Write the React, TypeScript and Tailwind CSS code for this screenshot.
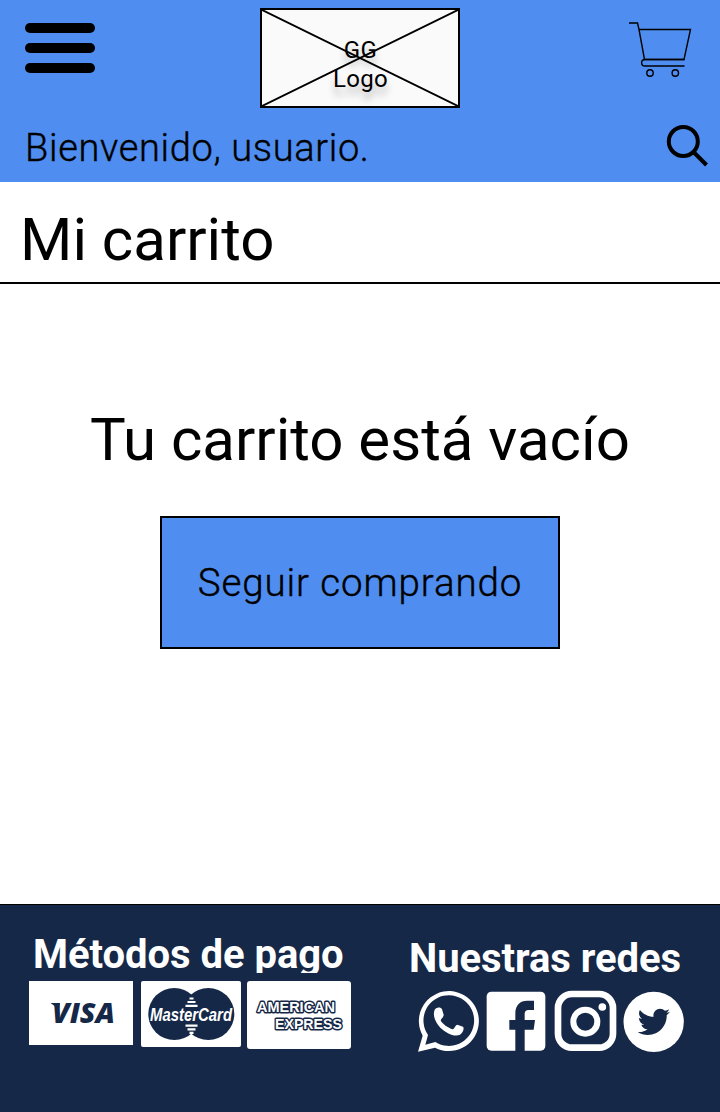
import { FaTwitter } from "react-icons/fa";

function CartIcon() {
  return (
    <svg className="h-[62px] w-[66px]" viewBox="0 0 66 62" fill="none" stroke="#000" strokeWidth="1.4">
      <path d="M2 6H10.5L12 12.5H63.5L57 42.5H17.5L12 12.5" />
      <path d="M57.5 42.5H18C13.5 42.5 13.5 49 18 49H57.5" />
      <circle cx="23" cy="56" r="3.2" />
      <circle cx="48.3" cy="56" r="3.2" />
    </svg>
  );
}

function Header() {
  return (
    <header className="h-[182px] bg-[#4f8ef0]">
      <div className="flex h-[115px] items-start pt-2 pr-[27px] pl-[25px]">
        <button aria-label="Menú" className="mt-[15px] flex w-[70px] flex-col gap-[10px]">
          <span className="h-[10px] rounded-full bg-black" />
          <span className="h-[10px] rounded-full bg-black" />
          <span className="h-[10px] rounded-full bg-black" />
        </button>
        <div className="relative ml-[165px] h-[100px] w-[200px] border-2 border-black bg-[#fafafa]">
          <svg className="absolute inset-0 h-full w-full" viewBox="0 0 196 96" stroke="#000" strokeWidth="2">
            <path d="M0 0L196 96M196 0L0 96" />
          </svg>
          <p className="relative pt-[26px] pl-px text-center text-[24px] leading-[28.5px] tracking-[0.3px] [text-shadow:0_8px_7px_rgba(0,0,0,0.25)]">
            GG
            <br />
            Logo
          </p>
        </div>
        <div className="mt-[9px] ml-auto">
          <CartIcon />
        </div>
      </div>
      <div className="flex items-start justify-between pr-[11px] pl-[25px]">
        <p className="pt-2 text-[38px] leading-[50px] font-light tracking-[0.65px] [-webkit-text-stroke:0.4px_#000]">Bienvenido, usuario.</p>
        <svg className="mt-[9px] h-[43px] w-[43px]" viewBox="0 0 43 43" fill="none" stroke="#000" strokeWidth="4">
          <circle cx="17.3" cy="17.5" r="14.5" />
          <path d="M27.5 28L40.5 41" />
        </svg>
      </div>
    </header>
  );
}

function Visa() {
  return (
    <svg className="h-16 w-[104px]" viewBox="0 0 104 64">
      <rect width="104" height="64" fill="#fff" />
      <text x="23" y="42.3" fontFamily="Open Sans" fontWeight="800" fontStyle="italic" fontSize="29" textLength="63" lengthAdjust="spacingAndGlyphs" fill="#162847">VISA</text>
      <path d="M21.5 22H31L30 28.2Z" fill="#162847" />
    </svg>
  );
}

function MasterCard() {
  return (
    <svg className="h-[66px] w-[100px]" viewBox="0 0 100 66">
      <rect width="100" height="66" rx="2" fill="#fff" />
      <circle cx="33.3" cy="33" r="26" fill="#162847" />
      <circle cx="67.3" cy="33" r="26" fill="#162847" />
      <path d="M48.5 17.5h4M46.5 21h8M44.5 24.8h12M44.5 44.7h12M46.5 48.3h8M48.5 51.8h4" stroke="#fff" strokeWidth="2.2" />
      <text x="9" y="39.5" fontFamily="Liberation Sans" fontWeight="700" fontStyle="italic" fontSize="17.5" textLength="82" lengthAdjust="spacingAndGlyphs" fill="#fff" stroke="#162847" strokeWidth="1.6" paintOrder="stroke">MasterCard</text>
    </svg>
  );
}

function Amex() {
  return (
    <svg className="h-[68px] w-[104px]" viewBox="0 0 104 68">
      <rect width="104" height="68" rx="3" fill="#fff" />
      <g fontFamily="Liberation Sans" fontWeight="700" fontSize="15" fill="#fff" stroke="#162847" strokeWidth="3" strokeLinejoin="round" paintOrder="stroke">
        <text x="10" y="31" textLength="78" lengthAdjust="spacingAndGlyphs">AMERICAN</text>
        <text x="28" y="48" textLength="67" lengthAdjust="spacingAndGlyphs">EXPRESS</text>
      </g>
    </svg>
  );
}

function Social() {
  return (
    <div className="flex gap-[7px] pl-[9px]">
      <svg className="h-[63px] w-[61px]" viewBox="54 180 183 189" fill="#fff">
        <path fillRule="evenodd" d="M54 365L68 317A90 90 0 1 1 105 353ZM76 344L106 336A76 76 0 1 0 84 315Z" />
        <path d="M103 242C106 232 122 229 126 238L131 254C132 262 123 265 122 271C126 282 145 294 158 298C163 297 166 285 172 284L189 290C194 296 188 309 180 314C163 322 138 309 121 293C107 278 98 259 103 242Z" />
      </svg>
      <svg className="h-[63px] w-[60px]" viewBox="258 180 180 189">
        <rect x="260" y="185" width="176" height="177" rx="14" fill="#fff" />
        <path d="M346 363V299H328V270H346V250C346 225 361 212 381 212H402V240H388C377 240 374 244 374 253V270H405L401 299H374V363Z" fill="#162847" />
      </svg>
      <svg className="h-[63px] w-[64px]" viewBox="459 180 192 189" fill="none" stroke="#fff">
        <rect x="474" y="192" width="165" height="161" rx="42" strokeWidth="20" />
        <circle cx="556" cy="275" r="36" strokeWidth="18" />
        <circle cx="607" cy="231" r="11.5" fill="#fff" stroke="none" />
      </svg>
      <svg className="h-[63px] w-[60px] overflow-visible" viewBox="672 180 180 189">
        <circle cx="761" cy="275.5" r="90.5" fill="#fff" />
        <FaTwitter x="713" y="227" size={97} color="#162847" />
      </svg>
    </div>
  );
}

export default function App() {
  return (
    <div className="flex h-[1112px] w-[720px] flex-col overflow-hidden bg-white font-['Roboto',sans-serif] text-black">
      <Header />
      <h1 className="h-[102px] border-b-2 border-black pt-[28px] pl-5 text-[60px] leading-[60px]">Mi carrito</h1>
      <main className="flex flex-1 flex-col items-center">
        <p className="mt-[126px] text-[60px] leading-[60px]">Tu carrito está vacío</p>
        <button className="mt-[46px] h-[133px] w-[400px] border-2 border-black bg-[#4f8ef0] text-[38.5px] font-light tracking-[0.9px] [-webkit-text-stroke:0.4px_#000]">
          Seguir comprando
        </button>
      </main>
      <footer className="flex h-52 border-t border-black bg-[#162847] text-white">
        <section className="w-[409px] pl-[29px]">
          <h2 className="h-[68px] overflow-hidden pt-[25px] pl-1 text-[40px] leading-[50px] font-bold tracking-[-0.04px] whitespace-nowrap">Métodos de pago</h2>
          <div className="flex items-start pt-2">
            <Visa />
            <div className="mr-[6px] ml-2"><MasterCard /></div>
            <Amex />
          </div>
        </section>
        <section>
          <h2 className="h-[85px] pt-[29px] text-[40px] leading-[50px] font-bold tracking-[-0.06px] whitespace-nowrap">Nuestras redes</h2>
          <Social />
        </section>
      </footer>
    </div>
  );
}
